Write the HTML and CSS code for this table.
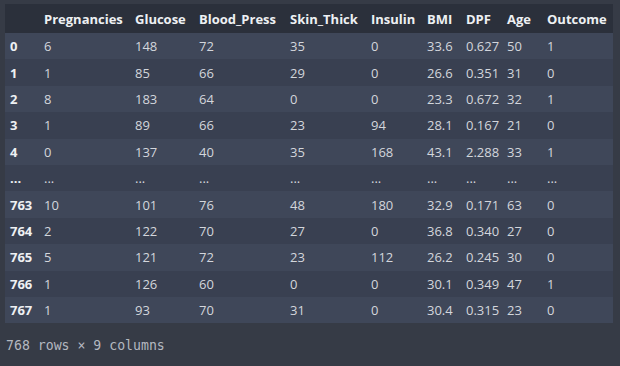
FILE: index.html
```html
<!DOCTYPE html>
<html>
<head>
<meta charset="utf-8">
<link rel="stylesheet" href="styles.css">
</head>
<body>
<div class="output">
  <div class="frame">
    <table class="df">
      <thead>
        <tr><th></th><th>Pregnancies</th><th>Glucose</th><th>Blood_Press</th><th>Skin_Thick</th><th>Insulin</th><th>BMI</th><th>DPF</th><th>Age</th><th>Outcome</th></tr>
      </thead>
      <tbody>
        <tr><th>0</th><td>6</td><td>148</td><td>72</td><td>35</td><td>0</td><td>33.6</td><td>0.627</td><td>50</td><td>1</td></tr>
        <tr><th>1</th><td>1</td><td>85</td><td>66</td><td>29</td><td>0</td><td>26.6</td><td>0.351</td><td>31</td><td>0</td></tr>
        <tr><th>2</th><td>8</td><td>183</td><td>64</td><td>0</td><td>0</td><td>23.3</td><td>0.672</td><td>32</td><td>1</td></tr>
        <tr><th>3</th><td>1</td><td>89</td><td>66</td><td>23</td><td>94</td><td>28.1</td><td>0.167</td><td>21</td><td>0</td></tr>
        <tr><th>4</th><td>0</td><td>137</td><td>40</td><td>35</td><td>168</td><td>43.1</td><td>2.288</td><td>33</td><td>1</td></tr>
        <tr class="ellipsis"><th>...</th><td>...</td><td>...</td><td>...</td><td>...</td><td>...</td><td>...</td><td>...</td><td>...</td><td>...</td></tr>
        <tr><th>763</th><td>10</td><td>101</td><td>76</td><td>48</td><td>180</td><td>32.9</td><td>0.171</td><td>63</td><td>0</td></tr>
        <tr><th>764</th><td>2</td><td>122</td><td>70</td><td>27</td><td>0</td><td>36.8</td><td>0.340</td><td>27</td><td>0</td></tr>
        <tr><th>765</th><td>5</td><td>121</td><td>72</td><td>23</td><td>112</td><td>26.2</td><td>0.245</td><td>30</td><td>0</td></tr>
        <tr><th>766</th><td>1</td><td>126</td><td>60</td><td>0</td><td>0</td><td>30.1</td><td>0.349</td><td>47</td><td>1</td></tr>
        <tr><th>767</th><td>1</td><td>93</td><td>70</td><td>31</td><td>0</td><td>30.4</td><td>0.315</td><td>23</td><td>0</td></tr>
      </tbody>
    </table>
  </div>
  <p class="shape">768 rows × 9 columns</p>
</div>
</body>
</html>
```

FILE: styles.css
```css
html, body {
  margin: 0;
  padding: 0;
  background: #363b46;
}
.output {
  width: 620px;
  height: 366px;
  padding-top: 4px;
  box-sizing: border-box;
  font-family: "Open Sans", "Noto Sans", sans-serif;
}
.frame {
  margin-left: 5px;
  width: 608px;
}
.df {
  border-collapse: collapse;
  border-spacing: 0;
  table-layout: fixed;
  width: 608px;
  font-size: 13px;
  color: #d3d6dc;
}
.df th, .df td {
  padding: 0 0 0 5px;
  text-align: left;
  white-space: nowrap;
  overflow: hidden;
}
.df thead th {
  height: 29px;
  background: #2b303b;
  color: #eef0f3;
  font-weight: 700;
}
.df tbody tr {
  height: 26.4px;
}
.df tbody th {
  font-weight: 700;
  color: #eef0f3;
}
.df tbody tr:nth-child(odd) {
  background: #3f4759;
}
.df tbody tr:nth-child(even) {
  background: #394051;
}
.df th:nth-child(1) { width: 29px; }
.df th:nth-child(2) { width: 86px; }
.df th:nth-child(3) { width: 59px; }
.df th:nth-child(4) { width: 86px; }
.df th:nth-child(5) { width: 76px; }
.df th:nth-child(6) { width: 51px; }
.df th:nth-child(7) { width: 34px; }
.df th:nth-child(8) { width: 36px; }
.df th:nth-child(9) { width: 35px; }
.df th:nth-child(10) { width: 66px; }
.shape {
  margin: 15px 0 0 6px;
  font-family: "DejaVu Sans Mono", monospace;
  font-size: 13.2px;
  color: #b4b8c0;
}
```
